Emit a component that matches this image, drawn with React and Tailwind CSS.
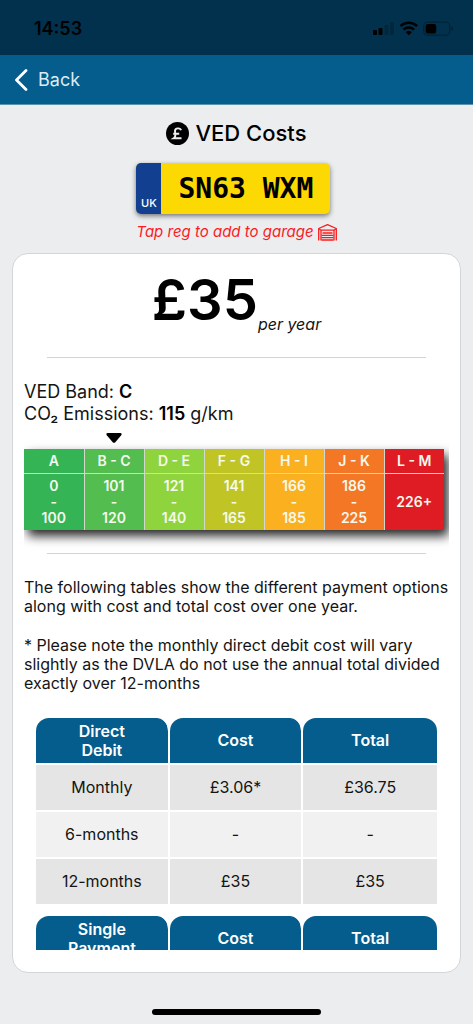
import React from "react";

const bands = [
  { name: "A", from: "0", to: "100", color: "bg-[#34b455]" },
  { name: "B - C", from: "101", to: "120", color: "bg-[#53be4f]" },
  { name: "D - E", from: "121", to: "140", color: "bg-[#90d43d]" },
  { name: "F - G", from: "141", to: "165", color: "bg-[#c0c525]" },
  { name: "H - I", from: "166", to: "185", color: "bg-[#fbb020]" },
  { name: "J - K", from: "186", to: "225", color: "bg-[#f47725]" },
  { name: "L - M", from: "226+", color: "bg-[#df1c24]" },
];

function StatusBar() {
  return (
    <div className="flex h-[55px] shrink-0 items-center justify-between bg-[#02314e] pt-[2px] pr-[19px] pl-[34px] text-black">
      <span className="text-[18px] leading-6 font-semibold">14:53</span>
      <svg width="81" height="16" viewBox="0 0 81 16" aria-hidden="true">
        <rect x="0" y="9" width="4" height="5" rx="1" />
        <rect x="5.500" y="7" width="4" height="7" rx="1" />
        <rect x="11.500" y="4" width="4" height="10" rx="1" opacity="0.2" />
        <rect x="17" y="1" width="4" height="13" rx="1" opacity="0.2" />
        <g fill="none" stroke="black" strokeWidth="2.500">
          <path d="M27.500 5.200a12 12 0 0 1 16.600 0" />
          <path d="M30.500 8.600a7.700 7.700 0 0 1 10.600 0" />
        </g>
        <path d="M32.800 11.200a4.400 4.400 0 0 1 6 0l-3 3z" />
        <rect x="50.700" y="1.200" width="26" height="13" rx="4" fill="none" stroke="black" strokeOpacity="0.3" strokeWidth="1.300" />
        <rect x="52.700" y="3" width="10.500" height="9.500" rx="2" />
        <path d="M78.500 5.500c2 .8 2 3.700 0 4.500z" opacity="0.4" />
      </svg>
    </div>
  );
}

function GarageIcon() {
  return (
    <svg width="19" height="17" viewBox="0 0 19 17" fill="none" stroke="currentColor" strokeWidth="1.300" strokeLinejoin="round" aria-hidden="true">
      <path d="M.7 16.500V4.500L9.500.7l8.800 3.800V16.500" />
      <path d="M3 16.500V6.200h13V16.500M1 4.800l2 1.400M18 4.800l-2 1.400" />
      <path d="M4.500 9h10M3.500 11.300h12M3.500 13.700h12M3.500 16h12" />
    </svg>
  );
}

function PaymentTable({ title, rows }) {
  return (
    <table className="w-full table-fixed border-separate border-spacing-0 text-center text-[16px] leading-[19px]">
      <thead>
        <tr>
          {[title, "Cost", "Total"].map((h, i) => (
            <th
              key={h}
              scope="col"
              className={`h-[47px] border-b-2 border-white bg-[#045d8c] bg-clip-padding px-8 py-0 font-semibold text-white rounded-t-[13px] ${i < 2 ? "border-r-2" : ""}`}
            >
              {h}
            </th>
          ))}
        </tr>
      </thead>
      <tbody>
        {rows.map((row, r) => (
          <tr key={row[0]} className={r % 2 ? "bg-[#f1f1f1]" : "bg-[#e5e5e5]"}>
            {row.map((cell, i) => (
              <td key={i} className={`h-[47px] border-b-2 border-white p-0 ${i < 2 ? "border-r-2" : ""}`}>
                {cell}
              </td>
            ))}
          </tr>
        ))}
      </tbody>
    </table>
  );
}

export default function App() {
  return (
    <div className="flex h-screen flex-col bg-[#ecedef] font-['Inter','Liberation_Sans',sans-serif] text-[#141414]">
      <StatusBar />
      <header className="flex h-[50px] shrink-0 items-center border-b border-[#5f91ad] bg-[#045d8c] px-[14px]">
        <button type="button" className="flex items-center gap-[10px] text-[18px] text-[#dcebf5]">
          <svg width="14" height="22" viewBox="0 0 14 22" fill="none" stroke="white" strokeWidth="2.800" strokeLinecap="round" strokeLinejoin="round" aria-hidden="true">
            <path d="M12 1.500 2.500 11 12 20.500" />
          </svg>
          Back
        </button>
      </header>

      <div className="flex shrink-0 flex-col items-center pt-[14px]">
        <h1 className="flex items-center gap-[6px] text-[22px] leading-7 font-medium text-black">
          <svg width="23" height="23" viewBox="0 0 23 23" aria-hidden="true">
            <circle cx="11.500" cy="11.500" r="11.500" />
            <path d="M15 8.200C14.400 5.600 9 5.600 9 9c0 2.500 1.700 5.400-1.300 7.300H15.500M7.200 11.800h6" fill="none" stroke="#ecedef" strokeWidth="1.900" />
          </svg>
          VED Costs
        </h1>
        <div className="mt-4 flex flex-col items-start">
          <button type="button" className="flex h-[51px] w-[194px] overflow-hidden rounded-[5px] bg-[#fdd903] shadow-[0_2px_5px_rgba(0,0,0,0.5)]">
            <span className="flex h-full w-[25px] shrink-0 items-end justify-center bg-[#123f8f] pb-1 text-[11px] leading-[14px] font-medium text-white">UK</span>
            <span className="flex h-full flex-1 items-center justify-center font-['DejaVu_Sans_Mono',monospace] text-[28px] font-bold text-black">SN63 WXM</span>
          </button>
          <p className="mt-2 flex items-center gap-1 text-[15px] leading-5 text-[#f91c1f]">
            <em>Tap reg to add to garage</em>
            <GarageIcon />
          </p>
        </div>
      </div>

      <main className="mx-3 mt-[11px] flex min-h-0 flex-1 flex-col rounded-2xl border border-[#d4d5d6] bg-white pt-3 pr-[11px] pb-[22px] pl-[11px]">
        <div className="min-h-0 flex-1 overflow-hidden">
          <p className="flex items-end justify-center text-black">
            <span className="text-[56px] leading-[68px] font-semibold">£35</span>
            <em className="text-[16px] leading-5 text-[#141414]">per year</em>
          </p>
          <hr className="mx-[23px] mt-[23px] border-[#d4d4d4]" />
          <p className="mt-[23px] text-[18px] leading-[22px]">
            VED Band: <b className="font-semibold text-black">C</b>
            <br />
            CO₂ Emissions: <b className="font-semibold text-black">115</b> g/km
          </p>

          <div className="pr-[5px]">
            <div className="grid h-6 grid-cols-7 items-end pb-[6px]">
              <svg className="col-start-2 justify-self-center" width="16" height="10" viewBox="0 0 16 10" aria-hidden="true">
                <path d="M1.500 0h13q2 .5.700 2.300L9.300 9.200Q8 10.500 6.700 9.200L.8 2.300Q-.5.500 1.500 0z" />
              </svg>
            </div>
            <table className="w-full table-fixed border-collapse text-center text-[14px] leading-4 font-semibold text-[#f5f9ee] shadow-[4px_6px_10px_rgba(0,0,0,0.85)]">
              <thead>
                <tr>
                  {bands.map((b, i) => (
                    <th key={b.name} scope="col" className={`h-6 border-b border-[#d3d8cd] p-0 font-semibold ${i ? "border-l" : ""} ${b.color}`}>
                      {b.name}
                    </th>
                  ))}
                </tr>
              </thead>
              <tbody>
                <tr>
                  {bands.map((b, i) => (
                    <td key={b.name} className={`h-[57px] border-[#d3d8cd] p-0 ${i ? "border-l" : ""} ${b.color}`}>
                      {b.from}
                      {b.to && (
                        <>
                          <br />-<br />
                          {b.to}
                        </>
                      )}
                    </td>
                  ))}
                </tr>
              </tbody>
            </table>
          </div>

          <hr className="mx-[23px] mt-[23px] border-[#d4d4d4]" />
          <div className="mt-6 flex flex-col gap-5 text-[16px] leading-[19px]">
            <p>The following tables show the different payment options along with cost and total cost over one year.</p>
            <p>* Please note the monthly direct debit cost will vary slightly as the DVLA do not use the annual total divided exactly over 12-months</p>
          </div>
          <div className="mx-3 mt-[25px] flex flex-col gap-[10px]">
            <PaymentTable
              title="Direct Debit"
              rows={[
                ["Monthly", "£3.06*", "£36.75"],
                ["6-months", "-", "-"],
                ["12-months", "£35", "£35"],
              ]}
            />
            <PaymentTable title="Single Payment" rows={[]} />
          </div>
        </div>
      </main>

      <div className="flex h-[51px] shrink-0 items-end justify-center pb-[9px]">
        <div className="h-[6px] w-[169px] rounded-full bg-black" />
      </div>
    </div>
  );
}
